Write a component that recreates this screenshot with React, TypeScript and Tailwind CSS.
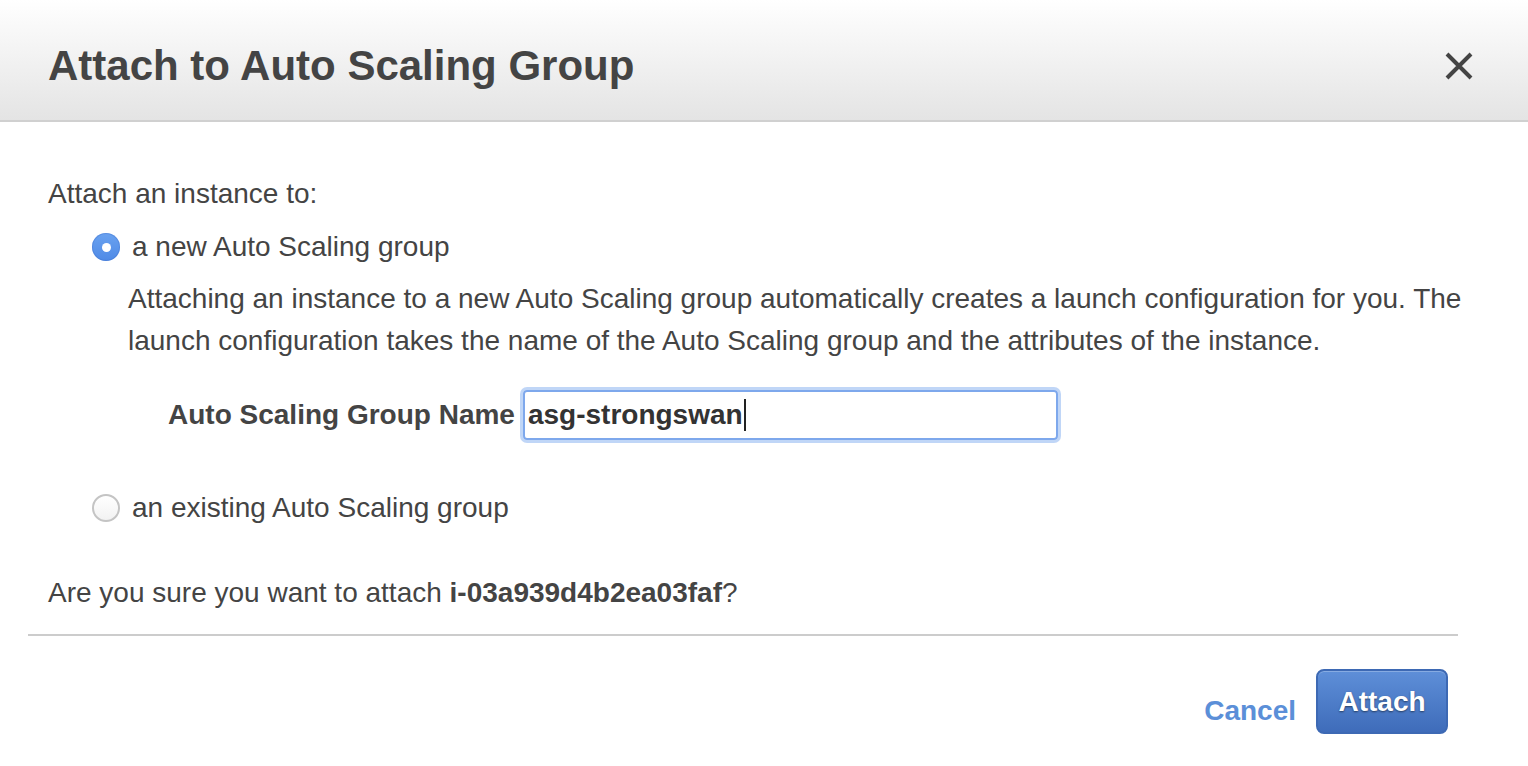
import React from "react";

function Radio({ checked }: { checked?: boolean }) {
  if (checked) {
    return (
      <span className="flex h-[28px] w-[28px] shrink-0 items-center justify-center rounded-full bg-gradient-to-b from-[#6aa2f0] to-[#4f8ae6] shadow-[inset_0_0_0_1px_rgba(60,110,200,0.35)]">
        <span className="h-[9px] w-[9px] rounded-full bg-white" />
      </span>
    );
  }
  return (
    <span className="h-[28px] w-[28px] shrink-0 rounded-full border-2 border-[#c4c4c4] bg-gradient-to-b from-white to-[#f2f2f2]" />
  );
}

export default function App() {
  return (
    <div
      className="min-h-[766px] w-[1528px] bg-white text-[#444]"
      style={{ fontFamily: '"Liberation Sans", Arial, sans-serif' }}
    >
      <header className="flex h-[122px] items-center justify-between border-b-2 border-[#d0d0d0] bg-gradient-to-b from-white to-[#e4e4e4] pl-[48px] pr-[54px]">
        <h1 className="mt-[12px] text-[42px] font-bold leading-none text-[#444]">
          Attach to Auto Scaling Group
        </h1>
        <svg width="30" height="30" viewBox="0 0 30 30" className="mt-[12px]">
          <path d="M3 3 L27 27 M27 3 L3 27" stroke="#444" strokeWidth="4" strokeLinecap="butt" />
        </svg>
      </header>

      <main className="px-[48px] text-[28px] leading-[42px]">
        <p className="mt-[51px]">Attach an instance to:</p>

        <div className="ml-[44px] mt-[11px]">
          <label className="flex items-center gap-[12px]">
            <Radio checked />
            <span>a new Auto Scaling group</span>
          </label>

          <p className="ml-[36px] mt-[10px] w-[1360px]">
            Attaching an instance to a new Auto Scaling group automatically creates a launch
            configuration for you. The launch configuration takes the name of the Auto Scaling
            group and the attributes of the instance.
          </p>

          <div className="ml-[76px] mt-[28px] flex items-center gap-[8px]">
            <span className="font-bold">Auto Scaling Group Name</span>
            <div className="flex h-[50px] w-[535px] items-center rounded-[4px] border-2 border-[#7ea8ec] px-[3px] shadow-[0_0_0_3px_rgba(140,180,240,0.55)]">
              <span className="font-bold text-[#333]">asg-strongswan</span>
              <span className="ml-[1px] h-[32px] w-[2px] bg-[#222]" />
            </div>
          </div>

          <label className="mt-[47px] flex items-center gap-[12px]">
            <Radio />
            <span>an existing Auto Scaling group</span>
          </label>
        </div>

        <p className="mt-[43px]">
          Are you sure you want to attach <span className="font-bold">i-03a939d4b2ea03faf</span>?
        </p>
      </main>

      <hr className="ml-[28px] mt-[20px] w-[1430px] border-0 border-t-2 border-[#cccccc]" />

      <footer className="mr-[80px] mt-[33px] flex items-end justify-end gap-[20px]">
        <button className="mb-[2px] text-[28px] font-bold leading-[42px] text-[#5b8fd8]">
          Cancel
        </button>
        <button className="flex h-[65px] w-[132px] items-center justify-center rounded-[8px] border-2 border-[#3d69b4] bg-gradient-to-b from-[#5e8fd8] to-[#3f6cba] text-[28px] font-bold text-white shadow-[inset_0_1px_0_rgba(255,255,255,0.25)] [text-shadow:0_1px_2px_rgba(0,0,0,0.5)]">
          Attach
        </button>
      </footer>
    </div>
  );
}
